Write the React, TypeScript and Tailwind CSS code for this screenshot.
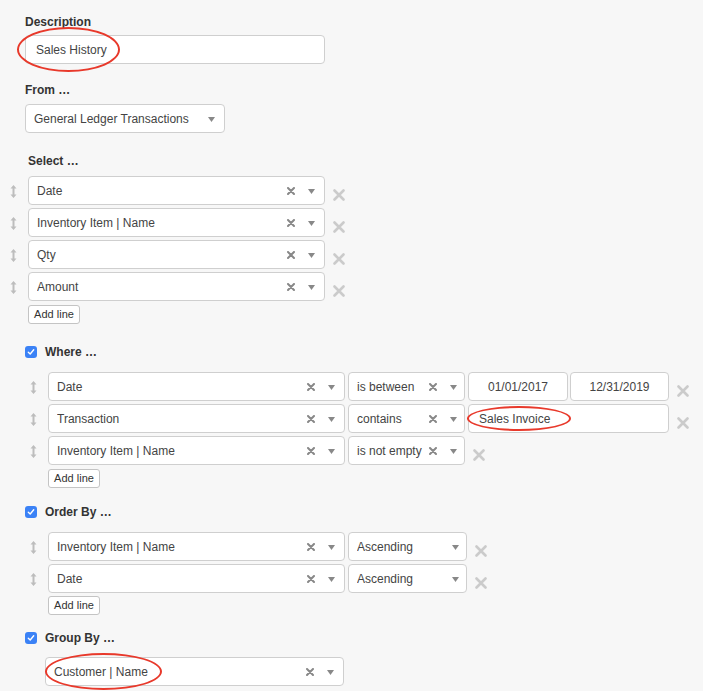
import React from 'react';

const font = { fontFamily: '"Liberation Sans", Arial, sans-serif' };

function DragHandle() {
  return (
    <svg width="7" height="15" viewBox="0 0 7 15" className="text-[#bdbdbd]">
      <path d="M3.5 1 L6.5 4.5 H0.5 Z M3.5 14 L6.5 10.5 H0.5 Z" fill="currentColor" />
      <rect x="2.5" y="4" width="2" height="7" fill="currentColor" />
    </svg>
  );
}

function Handle() {
  return (
    <span className="w-[20px] h-[29px] flex items-center justify-start pl-[2px] pt-[1px]">
      <DragHandle />
    </span>
  );
}

function ClearX() {
  return (
    <svg width="8" height="8" viewBox="0 0 8 8">
      <path d="M1 1 L7 7 M7 1 L1 7" stroke="#888" strokeWidth="2" strokeLinecap="round" />
    </svg>
  );
}

function Caret() {
  return (
    <svg width="7" height="5" viewBox="0 0 7 5">
      <path d="M0 0 H7 L3.5 5 Z" fill="#888" />
    </svg>
  );
}

function RemoveX() {
  return (
    <svg width="12" height="12" viewBox="0 0 12 12" className="mt-[13px]">
      <path d="M1.5 1.5 L10.5 10.5 M10.5 1.5 L1.5 10.5" stroke="#cbcbcb" strokeWidth="2.6" strokeLinecap="round" />
    </svg>
  );
}

function Box({ className = '', children }: { className?: string; children?: React.ReactNode }) {
  return (
    <div className={`h-[29px] pt-[1px] bg-white border border-[#cfcfcf] rounded-[4px] flex items-center text-[12px] text-[#444] ${className}`}>
      {children}
    </div>
  );
}

function Picker({ label, width, clearable = true, narrow = false }: { label: string; width: string; clearable?: boolean; narrow?: boolean }) {
  return (
    <Box className={`${width} pl-[8px] ${narrow ? 'pr-[7px]' : 'pr-[9px]'}`}>
      <span className="flex-1 truncate">{label}</span>
      {clearable && (
        <span className="mr-[13px] flex">
          <ClearX />
        </span>
      )}
      <Caret />
    </Box>
  );
}

function Label({ children }: { children: React.ReactNode }) {
  return <div className="text-[12px] leading-[14px] font-bold text-[#333]">{children}</div>;
}

function CheckHeader({ children, className = '' }: { children: React.ReactNode; className?: string }) {
  return (
    <div className={`flex items-center h-[14px] ${className}`}>
      <span className="w-[12px] h-[12px] rounded-[3px] bg-[#3b82f6] flex items-center justify-center">
        <svg width="8" height="8" viewBox="0 0 8 8">
          <path d="M1.3 4.2 L3.2 6 L6.7 1.8" stroke="white" strokeWidth="1.4" fill="none" strokeLinecap="round" strokeLinejoin="round" />
        </svg>
      </span>
      <span className="ml-[8px] text-[12px] font-bold text-[#333]">{children}</span>
    </div>
  );
}

function AddLine({ className = '' }: { className?: string }) {
  return (
    <button className={`h-[19px] w-[52px] bg-white border border-[#c4c4c4] rounded-[3px] text-[11px] text-[#333] flex items-center justify-center ${className}`}>
      Add line
    </button>
  );
}

function Ellipse({ className }: { className: string }) {
  return <span className={`absolute border-2 border-[#e8392b] rounded-[50%] pointer-events-none ${className}`} />;
}

export default function App() {
  const selectCols = ['Date', 'Inventory Item | Name', 'Qty', 'Amount'];

  return (
    <div className="min-h-screen bg-[#f7f7f7] pl-[25px] pt-[15px] pb-[10px]" style={font}>
      <Label>Description</Label>
      <div className="relative mt-[6px] w-[300px]">
        <Box className="w-[300px] px-[10px]">Sales History</Box>
        <Ellipse className="-left-[8px] -top-[8px] w-[103px] h-[45px]" />
      </div>

      <div className="mt-[19px]">
        <Label>From …</Label>
      </div>
      <div className="mt-[7px]">
        <Picker label="General Ledger Transactions" width="w-[200px]" clearable={false} />
      </div>

      <div className="mt-[21px] ml-[3px]">
        <Label>Select …</Label>
      </div>
      <div className="mt-[8px] -ml-[17px] flex flex-col gap-[3px]">
        {selectCols.map((c) => (
          <div key={c} className="flex items-start">
            <Handle />
            <Picker label={c} width="w-[297px]" />
            <span className="ml-[8px]">
              <RemoveX />
            </span>
          </div>
        ))}
      </div>
      <AddLine className="mt-[4px] ml-[3px]" />

      <CheckHeader className="mt-[21px]">Where …</CheckHeader>
      <div className="mt-[13px] ml-[3px] flex flex-col gap-[3px]">
        <div className="flex items-start">
          <Handle />
          <Picker label="Date" width="w-[297px]" />
          <span className="ml-[3px]"><Picker label="is between" width="w-[117px]" narrow /></span>
          <Box className="ml-[3px] w-[100px] justify-center">01/01/2017</Box>
          <Box className="ml-[2px] w-[99px] justify-center">12/31/2019</Box>
          <span className="ml-[8px]"><RemoveX /></span>
        </div>
        <div className="flex items-start">
          <Handle />
          <Picker label="Transaction" width="w-[297px]" />
          <span className="ml-[3px]"><Picker label="contains" width="w-[117px]" narrow /></span>
          <div className="relative ml-[3px]">
            <Box className="w-[201px] px-[10px]">Sales Invoice</Box>
            <Ellipse className="-left-[1px] top-[2px] w-[104px] h-[25px]" />
          </div>
          <span className="ml-[8px]"><RemoveX /></span>
        </div>
        <div className="flex items-start">
          <Handle />
          <Picker label="Inventory Item | Name" width="w-[297px]" />
          <span className="ml-[3px]"><Picker label="is not empty" width="w-[117px]" narrow /></span>
          <span className="ml-[8px]"><RemoveX /></span>
        </div>
      </div>
      <AddLine className="mt-[4px] ml-[23px]" />

      <CheckHeader className="mt-[17px]">Order By …</CheckHeader>
      <div className="mt-[13px] ml-[3px] flex flex-col gap-[3px]">
        {['Inventory Item | Name', 'Date'].map((c) => (
          <div key={c} className="flex items-start">
            <Handle />
            <Picker label={c} width="w-[297px]" />
            <span className="ml-[3px]"><Picker label="Ascending" width="w-[119px]" clearable={false} narrow /></span>
            <span className="ml-[8px]"><RemoveX /></span>
          </div>
        ))}
      </div>
      <AddLine className="mt-[3px] ml-[23px]" />

      <CheckHeader className="mt-[16px]">Group By …</CheckHeader>
      <div className="relative mt-[12px] ml-[20px] w-[299px]">
        <Picker label="Customer | Name" width="w-[299px]" />
        <Ellipse className="left-0 -top-[4px] w-[117px] h-[37px]" />
      </div>
    </div>
  );
}
